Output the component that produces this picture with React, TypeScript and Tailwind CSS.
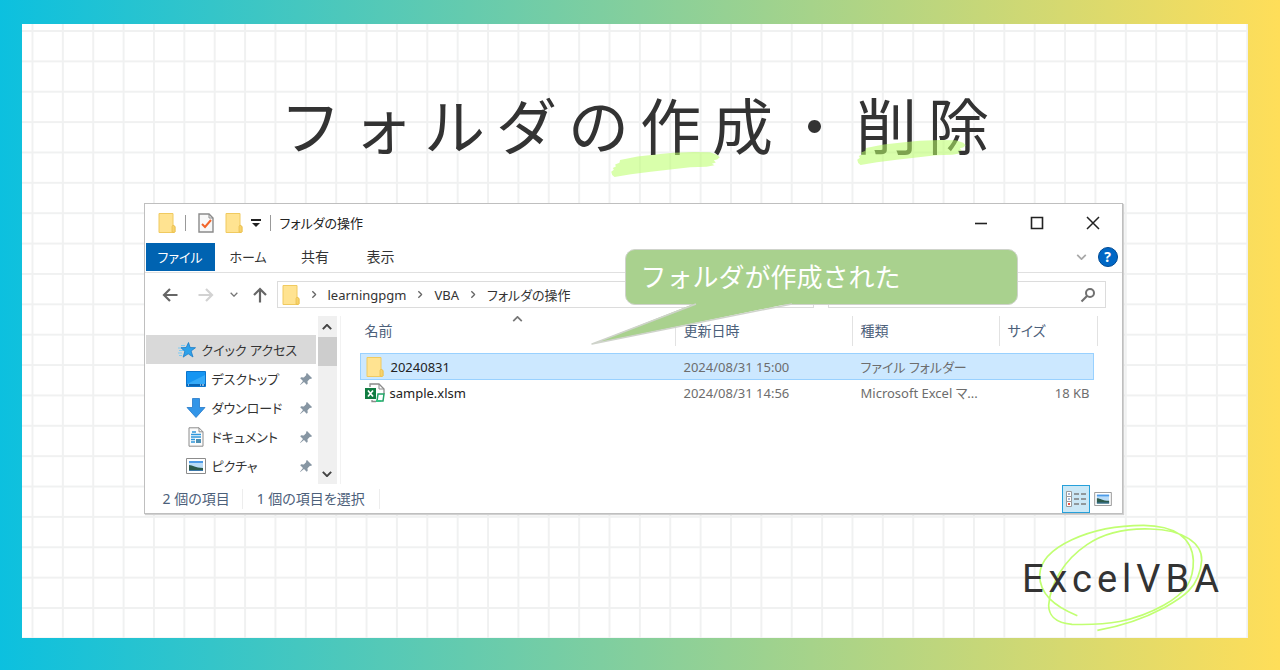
import type { ReactNode } from 'react';

type QuickItem = { label: string; icon: ReactNode };

type FileRow = {
  name: string;
  modified: string;
  type: string;
  size: string;
  icon: ReactNode;
  selected?: boolean;
};

const quickItems: QuickItem[] = [
  { label: 'デスクトップ', icon: <DesktopIcon /> },
  { label: 'ダウンロード', icon: <DownloadIcon /> },
  { label: 'ドキュメント', icon: <DocumentIcon /> },
  { label: 'ピクチャ', icon: <PictureIcon /> },
];

const files: FileRow[] = [
  { name: '20240831', modified: '2024/08/31 15:00', type: 'ファイル フォルダー', size: '', icon: <FolderIcon />, selected: true },
  { name: 'sample.xlsm', modified: '2024/08/31 14:56', type: 'Microsoft Excel マ...', size: '18 KB', icon: <ExcelIcon /> },
];

export default function App() {
  return (
    <div className="flex min-h-screen bg-linear-to-r/srgb from-[#0cc0df] to-[#ffde59] pt-6 pr-8 pb-8 pl-[22px]">
      <main className="relative flex flex-1 flex-col bg-white pr-5 pl-4">
        <GridPaper />
        <h1 className="relative pt-14 pl-[14px] text-center font-['Noto_Sans_CJK_JP',sans-serif] text-[61px] leading-[88px] tracking-[11px] text-[#333333]">
          フォルダの
          <Marked>作成</Marked>
          ・
          <Marked high>削除</Marked>
        </h1>
        <ExplorerWindow />
        <footer className="relative flex flex-1 items-start justify-end pt-10 pr-1">
          <div className="relative">
            <Scribble />
            <p className="relative font-['Roboto',sans-serif] text-[38px] leading-[50px] tracking-[5px] text-[#333333]">ExcelVBA</p>
          </div>
        </footer>
      </main>
    </div>
  );
}

function GridPaper() {
  return (
    <svg aria-hidden="true" className="absolute inset-0 h-full w-full">
      <defs>
        <pattern id="grid" x="9.5" y="6" width="30.37" height="30.37" patternUnits="userSpaceOnUse">
          <path d="M1 0V31M0 1H31" stroke="#f0f1f1" strokeWidth="2" />
        </pattern>
      </defs>
      <rect width="100%" height="100%" fill="url(#grid)" />
    </svg>
  );
}

function Marked({ children, high }: { children: ReactNode; high?: boolean }) {
  return (
    <span className="relative inline-block">
      {children}
      <svg viewBox="0 0 330 76" aria-hidden="true" className={high ? 'absolute top-[60px] left-0 h-[25px] w-[111px]' : 'absolute top-[72px] -left-[30px] h-[25px] w-[111px]'}>
        <path
          d="M27 24 80 14 150 6 190 2 250 0 300 1 322 8 330 16 322 23 312 25 318 32 306 36 314 40 290 45 240 46 180 53 120 60 60 68 10 76 3 70 0 60 8 54 5 49 14 44 12 38 25 33Z"
          fill="#b9ff66"
          fillOpacity="0.55"
        />
      </svg>
    </span>
  );
}

function Scribble() {
  return (
    <svg viewBox="110 35 504 336" fill="none" aria-hidden="true" className="absolute top-[-32px] left-[15px] h-28 w-[168px]">
      <path
        d="M231 316C170 292 118 255 118 195C120 110 270 45 430 45C520 46 575 80 579 150C580 210 560 245 490 285C400 335 320 345 215 342C160 338 145 310 145 285C150 220 190 150 260 103C320 62 390 54 450 56C550 58 606 100 604 150C598 235 540 265 490 293C430 325 360 348 291 360"
        stroke="#c1ff72"
        strokeWidth="5"
      />
    </svg>
  );
}

function ExplorerWindow() {
  return (
    <section className="relative mx-auto mt-[35px] w-full max-w-[979px] border border-[#bfbfbf] bg-white font-['Noto_Sans','Noto_Sans_CJK_JP',sans-serif] text-[13px] leading-5 text-[#333333] shadow-[1px_1px_1px_#d0d0d0] [font-feature-settings:'palt']">
      <TitleBar />
      <Ribbon />
      <AddressBar />
      <div className="flex">
        <Sidebar />
        <FileTable />
      </div>
      <StatusBar />
      <Callout />
    </section>
  );
}

function TitleBar() {
  return (
    <header className="flex h-[37px] items-center pl-[13px]">
      <FolderIcon />
      <span className="ml-[9px] h-4 w-px bg-[#999999]" />
      <button type="button" aria-label="プロパティ" className="ml-3">
        <svg viewBox="0 0 16 20" className="h-5 w-4" fill="none">
          <path d="M1 1h10l4 4v14H1Z" fill="#f8f8f8" stroke="#8a8a8a" strokeWidth="1.4" />
          <path d="M11 1v4h4" stroke="#8a8a8a" />
          <path d="m4 11 3 3 6-7" stroke="#f2652a" strokeWidth="2" />
        </svg>
      </button>
      <button type="button" aria-label="新しいフォルダー" className="ml-[11px]">
        <FolderIcon />
      </button>
      <button type="button" aria-label="クイック アクセス ツール バーのカスタマイズ" className="ml-2">
        <svg viewBox="0 0 10 8" className="h-2 w-[10px]">
          <path d="M0 0h10v2H0ZM1 4h8L5 8Z" fill="#222222" />
        </svg>
      </button>
      <span className="mx-[9px] h-4 w-px bg-[#999999]" />
      <h2 className="text-[#222222]">フォルダの操作</h2>
      <div className="ml-auto flex pr-px">
        <button type="button" aria-label="最小化" className="flex h-9 w-14 items-center justify-center">
          <svg viewBox="0 0 14 14" className="size-[14px]"><path d="M1 7.5h12" stroke="#222222" strokeWidth="1.6" /></svg>
        </button>
        <button type="button" aria-label="最大化" className="flex h-9 w-14 items-center justify-center">
          <svg viewBox="0 0 14 14" className="size-[14px]" fill="none"><path d="M1.5 1.5h11v11h-11Z" stroke="#222222" strokeWidth="1.6" /></svg>
        </button>
        <button type="button" aria-label="閉じる" className="flex h-9 w-14 items-center justify-center">
          <svg viewBox="0 0 14 14" className="size-[14px]"><path d="m1 1 12 12M13 1 1 13" stroke="#222222" strokeWidth="1.5" /></svg>
        </button>
      </div>
    </header>
  );
}

function Ribbon() {
  return (
    <div className="flex h-8 items-center border-b border-[#e0e0e0] pr-1 pl-px">
      <button type="button" className="h-7 w-[69px] bg-[#0063b1] text-white">ファイル</button>
      <button type="button" className="w-[67px]">ホーム</button>
      <button type="button" className="w-[67px] text-sm">共有</button>
      <button type="button" className="w-16 text-sm">表示</button>
      <button type="button" aria-label="リボンの展開" className="ml-auto">
        <Chevron className="h-[6px] w-[11px] text-[#a8a8a8]" />
      </button>
      <button type="button" aria-label="ヘルプ" className="ml-[11px] flex size-5 items-center justify-center rounded-full border border-[#004a94] bg-[#0067c5] text-sm font-bold text-white">
        ?
      </button>
    </div>
  );
}

function AddressBar() {
  return (
    <div className="flex h-[43px] items-center pr-4 pl-[17px]">
      <button type="button" aria-label="戻る">
        <Arrow className="h-[14px] w-4 text-[#666666]" />
      </button>
      <button type="button" aria-label="進む" className="ml-5">
        <Arrow className="h-[14px] w-4 rotate-180 text-[#d2d2d2]" />
      </button>
      <button type="button" aria-label="最近表示した場所" className="ml-4">
        <Chevron className="h-[5px] w-2 text-[#777777]" />
      </button>
      <button type="button" aria-label="上へ" className="ml-[14px]">
        <Arrow className="h-[14px] w-4 rotate-90 text-[#666666]" />
      </button>
      <nav aria-label="アドレス" className="ml-[9px] flex h-[27px] flex-1 items-center border border-[#dcdcdc] pl-1">
        <FolderIcon />
        <Separator />
        <a href="#learningpgm">learningpgm</a>
        <Separator />
        <a href="#vba">VBA</a>
        <Separator />
        <a href="#folder">フォルダの操作</a>
      </nav>
      <label className="ml-[14px] flex h-[27px] w-[278px] items-center border border-[#dcdcdc] pr-[9px]">
        <input type="search" aria-label="検索" className="min-w-0 flex-1 outline-none" />
        <svg viewBox="0 0 16 16" className="size-4" fill="none">
          <circle cx="10" cy="6" r="4" stroke="#707070" strokeWidth="2" />
          <path d="m7 9-5.5 5.5" stroke="#707070" strokeWidth="2.2" />
        </svg>
      </label>
    </div>
  );
}

function Separator() {
  return <Chevron className="mx-[10px] h-[5px] w-2 -rotate-90 text-[#666666]" />;
}

function Sidebar() {
  return (
    <aside className="flex h-[168px] w-[196px] shrink-0 border-r border-[#f2f2f2] pr-[3px] pl-px">
      <ul className="flex-1 pt-[19px]">
        <li className="flex h-[29px] items-center gap-[6px] bg-[#d9d9d9] pl-8">
          <StarIcon />
          <a href="#quick">クイック アクセス</a>
        </li>
        {quickItems.map((item) => (
          <li key={item.label} className="flex h-[29px] items-center gap-[6px] pr-[3px] pl-10">
            {item.icon}
            <a href={`#${item.label}`}>{item.label}</a>
            <PinIcon />
          </li>
        ))}
      </ul>
      <div className="ml-[2px] flex w-[19px] flex-col items-center bg-[#f0f0f0]">
        <button type="button" aria-label="上へスクロール" className="flex h-[21px] items-center">
          <Chevron className="h-[6px] w-[10px] rotate-180 text-[#444444]" thick />
        </button>
        <span className="h-[29px] w-full bg-[#cdcdcd]" />
        <button type="button" aria-label="下へスクロール" className="mt-auto flex h-[21px] items-center">
          <Chevron className="h-[6px] w-[10px] text-[#444444]" thick />
        </button>
      </div>
    </aside>
  );
}

function FileTable() {
  return (
    <div className="min-w-0 flex-1 pr-6 pl-[19px]">
      <table className="w-full table-fixed border-separate border-spacing-0 text-left text-[#6d6d6d]">
        <colgroup>
          <col />
          <col className="w-[177px]" />
          <col className="w-[147px]" />
          <col className="w-[94px]" />
          <col className="w-1" />
        </colgroup>
        <thead className="text-sm text-[#4c607a]">
          <tr>
            <th className="relative p-0 pb-[7px] font-normal">
              <Chevron className="absolute inset-x-0 top-0 mx-auto h-[6px] w-[11px] rotate-180 text-[#777777]" />
              <div className="h-[30px] border-r border-[#e2e2e2] pl-[5px] leading-[30px]">名前</div>
            </th>
            <th className="p-0 pb-[7px] font-normal">
              <div className="h-[30px] border-r border-[#e2e2e2] pl-2 leading-[30px]">更新日時</div>
            </th>
            <th className="p-0 pb-[7px] font-normal">
              <div className="h-[30px] border-r border-[#e2e2e2] pl-2 leading-[30px]">種類</div>
            </th>
            <th className="p-0 pb-[7px] font-normal">
              <div className="h-[30px] pl-2 leading-[30px]">サイズ</div>
            </th>
            <td className="p-0 pb-[7px]">
              <div className="h-[30px] border-r border-[#e2e2e2]" />
            </td>
          </tr>
        </thead>
        <tbody>
          {files.map((file) => (
            <tr key={file.name} className={file.selected ? '[&>td]:border-y [&>td]:border-[#99d1ff] [&>td]:bg-[#cce8ff]' : ''}>
              <td className={file.selected ? 'h-[27px] border-l p-0 pl-[5px]' : 'h-[26px] p-0 pl-[5px]'}>
                <div className="flex items-center text-[#222222]">
                  <span className="flex w-[25px]">{file.icon}</span>
                  {file.name}
                </div>
              </td>
              <td className="p-0 pl-2">{file.modified}</td>
              <td className="p-0 pl-2 whitespace-nowrap">{file.type}</td>
              <td className={file.selected ? 'border-r p-0 pr-1 text-right' : 'p-0 pr-1 text-right'}>{file.size}</td>
            </tr>
          ))}
        </tbody>
      </table>
    </div>
  );
}

function StatusBar() {
  return (
    <div className="flex h-[29px] items-center pr-[10px] pl-[18px] text-sm text-[#4c607a]">
      <p className="border-r border-[#ededed] pr-3">2 個の項目</p>
      <p className="border-r border-[#ededed] px-[14px]">1 個の項目を選択</p>
      <button type="button" aria-label="詳細" className="ml-auto flex h-[28px] w-7 items-center justify-center border border-[#26a0da] bg-[#cbe8f6]">
        <svg viewBox="0 0 22 18" className="h-[18px] w-[22px]" fill="none">
          <path d="M1.5 1.5h5v5h-5ZM1.5 6.5h5v5h-5ZM1.5 11.5h5v5h-5Z" fill="#ffffff" stroke="#9a9a9a" />
          <path d="M3 4h2M3 9h2" stroke="#8aa0c8" strokeWidth="1.5" />
          <path d="M3 14h2" stroke="#f05040" strokeWidth="2" />
          <path d="M9 4h5M16 4h5M9 9h5M16 9h5M9 14h5M16 14h5" stroke="#7d7d7d" strokeWidth="1.6" />
        </svg>
      </button>
      <button type="button" aria-label="大アイコン" className="ml-1">
        <PictureIcon small />
      </button>
    </div>
  );
}

function Callout() {
  return (
    <div className="absolute top-[45px] right-[104px] h-14 w-[393px] rounded-[10px] border border-[#cfd3cb] bg-[#a9d18e]">
      <svg viewBox="0 0 204 44" aria-hidden="true" className="absolute top-[52px] left-[-36px] h-11 w-[204px]" fill="none">
        <path d="M106 1 2 42 202 1Z" fill="#a9d18e" />
        <path d="M106 2 2 42 202 2" stroke="#cfd3cb" strokeWidth="1.5" strokeLinejoin="round" />
      </svg>
      <p className="relative pl-[15px] text-[26px] leading-[54px] text-white [font-feature-settings:normal]">フォルダが作成された</p>
    </div>
  );
}

function Chevron({ className, thick }: { className: string; thick?: boolean }) {
  return (
    <svg viewBox="0 0 12 7" className={className} fill="none" aria-hidden="true">
      <path d="m1 1 5 5 5-5" stroke="currentColor" strokeWidth={thick ? 2.4 : 2} />
    </svg>
  );
}

function Arrow({ className }: { className: string }) {
  return (
    <svg viewBox="0 0 16 14" className={className} fill="none" aria-hidden="true">
      <path d="M15.5 7H2M8 1 2 7l6 6" stroke="currentColor" strokeWidth="2.2" />
    </svg>
  );
}

function FolderIcon() {
  return (
    <svg viewBox="0 0 18 20" className="h-5 w-[18px] shrink-0" aria-hidden="true">
      <path d="M1 .5h14v12l2 1v5.500l-1 .5H1Z" fill="#ffe391" stroke="#f0ca60" />
      <path d="M14 19v-5.500l1-1.500 2 1.500v5l-1 1Z" fill="#f7d36c" stroke="#e8bb48" strokeWidth=".7" />
    </svg>
  );
}

function ExcelIcon() {
  return (
    <svg viewBox="0 0 20 20" className="size-5" fill="none" aria-hidden="true">
      <path d="M5 4V1h9l5 5v5M7 17v1.500h4" stroke="#8b8b8b" strokeWidth="1.3" />
      <path d="M14 1v5h5" stroke="#8b8b8b" />
      <path d="M0 5h11v11H0Z" fill="#107c41" />
      <path d="m3 7.500 5 6M8 7.500l-5 6" stroke="#ffffff" strokeWidth="1.7" />
      <path d="M13 11h6l-1 7h-6Z" fill="#ffffff" stroke="#21a366" strokeWidth="1.5" />
      <path d="M11 17h5v2h-5Z" fill="#33c481" />
    </svg>
  );
}

function StarIcon() {
  return (
    <svg viewBox="0 0 18 16" className="h-4 w-[18px]" aria-hidden="true">
      <path d="M3 3.500h4M0 6h4M1 8.500h4M0 11h4M1 13.500h3" stroke="#7ccbf4" />
      <path d="m10.500.5 1.600 5 5.400.2-4.400 3.300 1.900 6-4.800-3.200-5 3.300 1.600-5.700L3 5.700l5.200-.2Z" fill="#2ea2ea" stroke="#1a7cc8" strokeWidth=".8" />
    </svg>
  );
}

function DesktopIcon() {
  return (
    <svg viewBox="0 0 20 16" className="h-4 w-5" aria-hidden="true">
      <path d="M.5.5h19v15H.5Z" fill="#1595f2" stroke="#0a74cc" />
      <path d="M1 13 19 4v9Z" fill="#35aaf8" />
      <path d="M1 14h18" stroke="#0864b4" strokeWidth="2" />
      <path d="M2 14h1M14 14h1M16 14h2" stroke="#ffffff" />
    </svg>
  );
}

function DownloadIcon() {
  return (
    <svg viewBox="0 0 20 20" className="size-5" aria-hidden="true">
      <path d="M6.500.5h7v9h5.500L10 19.500 1 9.500h5.500Z" fill="#3295e8" stroke="#2478c8" strokeWidth=".8" />
    </svg>
  );
}

function DocumentIcon() {
  return (
    <svg viewBox="0 0 20 20" className="size-5" fill="none" aria-hidden="true">
      <path d="M3 .8h10l4 4v14.400H3Z" fill="#fbfbfb" stroke="#8c8c8c" />
      <path d="M13 .8v4h4" stroke="#8c8c8c" />
      <path d="M6 5h4M5 7.500h10M5 10h10M5 12.500h4M5 15h4" stroke="#2e96dc" strokeWidth="1.4" />
      <path d="M10 12h5v4h-5Z" fill="#4c8fb4" />
    </svg>
  );
}

function PictureIcon({ small }: { small?: boolean }) {
  return (
    <svg viewBox="0 0 20 16" className={small ? 'h-[14px] w-[18px]' : 'h-4 w-5'} aria-hidden="true">
      <path d="M.5.5h19v15H.5Z" fill="#ffffff" stroke="#8c8c8c" />
      <path d="M3 3h14v10H3Z" fill="#b9dcf8" />
      <path d="M3 3h14v2H3Z" fill="#4d9be8" />
      <path d="M3 7c4 0 6 3 14 3v3H3Z" fill="#2c5a4c" />
      <path d="M3 12h14v1H3Z" fill="#3d78a8" />
    </svg>
  );
}

function PinIcon() {
  return (
    <svg viewBox="0 0 14 14" className="ml-auto size-[14px]" aria-hidden="true">
      <path d="m8 1 5 5-1 1-1-.3-2.500 2.500.2 2.600-1 1L5 10l-3.700 3L1 12.700 4 9 1.200 6.300l1-1 2.600.2L7.300 3 7 2Z" fill="#8796a3" />
    </svg>
  );
}
